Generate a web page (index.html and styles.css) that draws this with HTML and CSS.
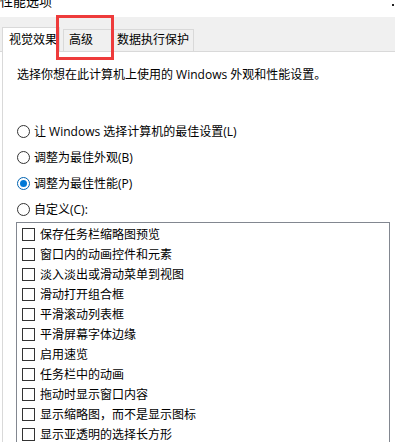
FILE: index.html
```
<!DOCTYPE html>
<html lang="zh-CN">
<head>
    <meta charset="UTF-8">
    <meta name="viewport" content="width=device-width, initial-scale=1.0">
    <title>性能选项</title>
    <link rel="stylesheet" href="styles.css">
</head>
<body>
    <div class="title"><span>性能选项</span></div>
    <span class="close-mark"></span>

    <div class="tabs">
        <div class="tab active">视觉效果</div>
        <div class="tab tab-adv">高级</div>
        <div class="tab tab-dep">数据执行保护</div>
    </div>
    <div class="highlight"></div>

    <main class="panel">
        <p class="desc">选择你想在此计算机上使用的 Windows 外观和性能设置。</p>

        <div class="radios">
            <label class="radio-row"><span class="radio"></span>让 Windows 选择计算机的最佳设置(L)</label>
            <label class="radio-row"><span class="radio"></span>调整为最佳外观(B)</label>
            <label class="radio-row"><span class="radio checked"></span>调整为最佳性能(P)</label>
            <label class="radio-row"><span class="radio"></span>自定义(C):</label>
        </div>

        <div class="listbox">
            <div class="check-row"><span class="box"></span>保存任务栏缩略图预览</div>
            <div class="check-row"><span class="box"></span>窗口内的动画控件和元素</div>
            <div class="check-row"><span class="box"></span>淡入淡出或滑动菜单到视图</div>
            <div class="check-row"><span class="box"></span>滑动打开组合框</div>
            <div class="check-row"><span class="box"></span>平滑滚动列表框</div>
            <div class="check-row"><span class="box"></span>平滑屏幕字体边缘</div>
            <div class="check-row"><span class="box"></span>启用速览</div>
            <div class="check-row"><span class="box"></span>任务栏中的动画</div>
            <div class="check-row"><span class="box"></span>拖动时显示窗口内容</div>
            <div class="check-row"><span class="box"></span>显示缩略图，而不是显示图标</div>
            <div class="check-row"><span class="box"></span>显示亚透明的选择长方形</div>
        </div>
    </main>
</body>
</html>
```

FILE: styles.css
```
body {
    margin: 0;
    background: #ffffff;
    color: #000000;
    font-family: "Open Sans", "Noto Sans CJK SC", sans-serif;
    font-size: 12px;
    overflow: hidden;
    height: 442px;
    position: relative;
}
.title {
    height: 17px;
    overflow: hidden;
    font-size: 13px;
}
.title span {
    display: block;
    margin-top: -9px;
    line-height: 20px;
}
.close-mark {
    position: absolute;
    left: 392px;
    top: 4px;
    width: 2px;
    height: 2px;
    background: #222;
}
.tabs {
    height: 34px;
    background: #f0f0f0;
    border-bottom: 1px solid #d9d9d9;
    display: flex;
    align-items: flex-end;
    padding-left: 2px;
}
.tab {
    box-sizing: border-box;
    height: 22px;
    line-height: 20px;
    border: 1px solid #d9d9d9;
    border-bottom: none;
    background: #f0f0f0;
    white-space: nowrap;
}
.tab.active {
    height: 25px;
    width: 58px;
    margin-bottom: -1px;
    background: #ffffff;
    padding-left: 6px;
    line-height: 24px;
}
.tab-adv {
    width: 51px;
    margin-left: 3px;
    padding-left: 5px;
}
.tab-dep {
    width: 81px;
    margin-left: -1px;
    padding-left: 3px;
}
.highlight {
    position: absolute;
    left: 56px;
    top: 15px;
    width: 52px;
    height: 39px;
    border: 3px solid #ee3b3b;
}
.panel {
    border-left: 1px solid #d9d9d9;
    margin-left: 2px;
    padding: 13px 0 0 14px;
    height: 377px;
}
.desc {
    margin: 0;
    line-height: 20px;
}
.radios {
    margin-top: 33px;
}
.radio-row {
    display: flex;
    align-items: center;
    height: 26px;
    gap: 4px;
}
.radio {
    box-sizing: border-box;
    width: 13px;
    height: 13px;
    border: 1px solid #333333;
    border-radius: 50%;
    display: flex;
    align-items: center;
    justify-content: center;
}
.radio.checked {
    border-color: #0063b1;
}
.radio.checked::after {
    content: "";
    width: 7px;
    height: 7px;
    border-radius: 50%;
    background: #0078d7;
}
.listbox {
    margin-left: -1px;
    width: 367px;
    border: 1px solid #828790;
    border-bottom: none;
    padding: 1px 0 0 5px;
    height: 218px;
    overflow: hidden;
}
.check-row {
    display: flex;
    align-items: center;
    height: 20px;
    gap: 5px;
    white-space: nowrap;
}
.box {
    box-sizing: border-box;
    width: 13px;
    height: 13px;
    border: 1px solid #333333;
    background: #ffffff;
}
```
